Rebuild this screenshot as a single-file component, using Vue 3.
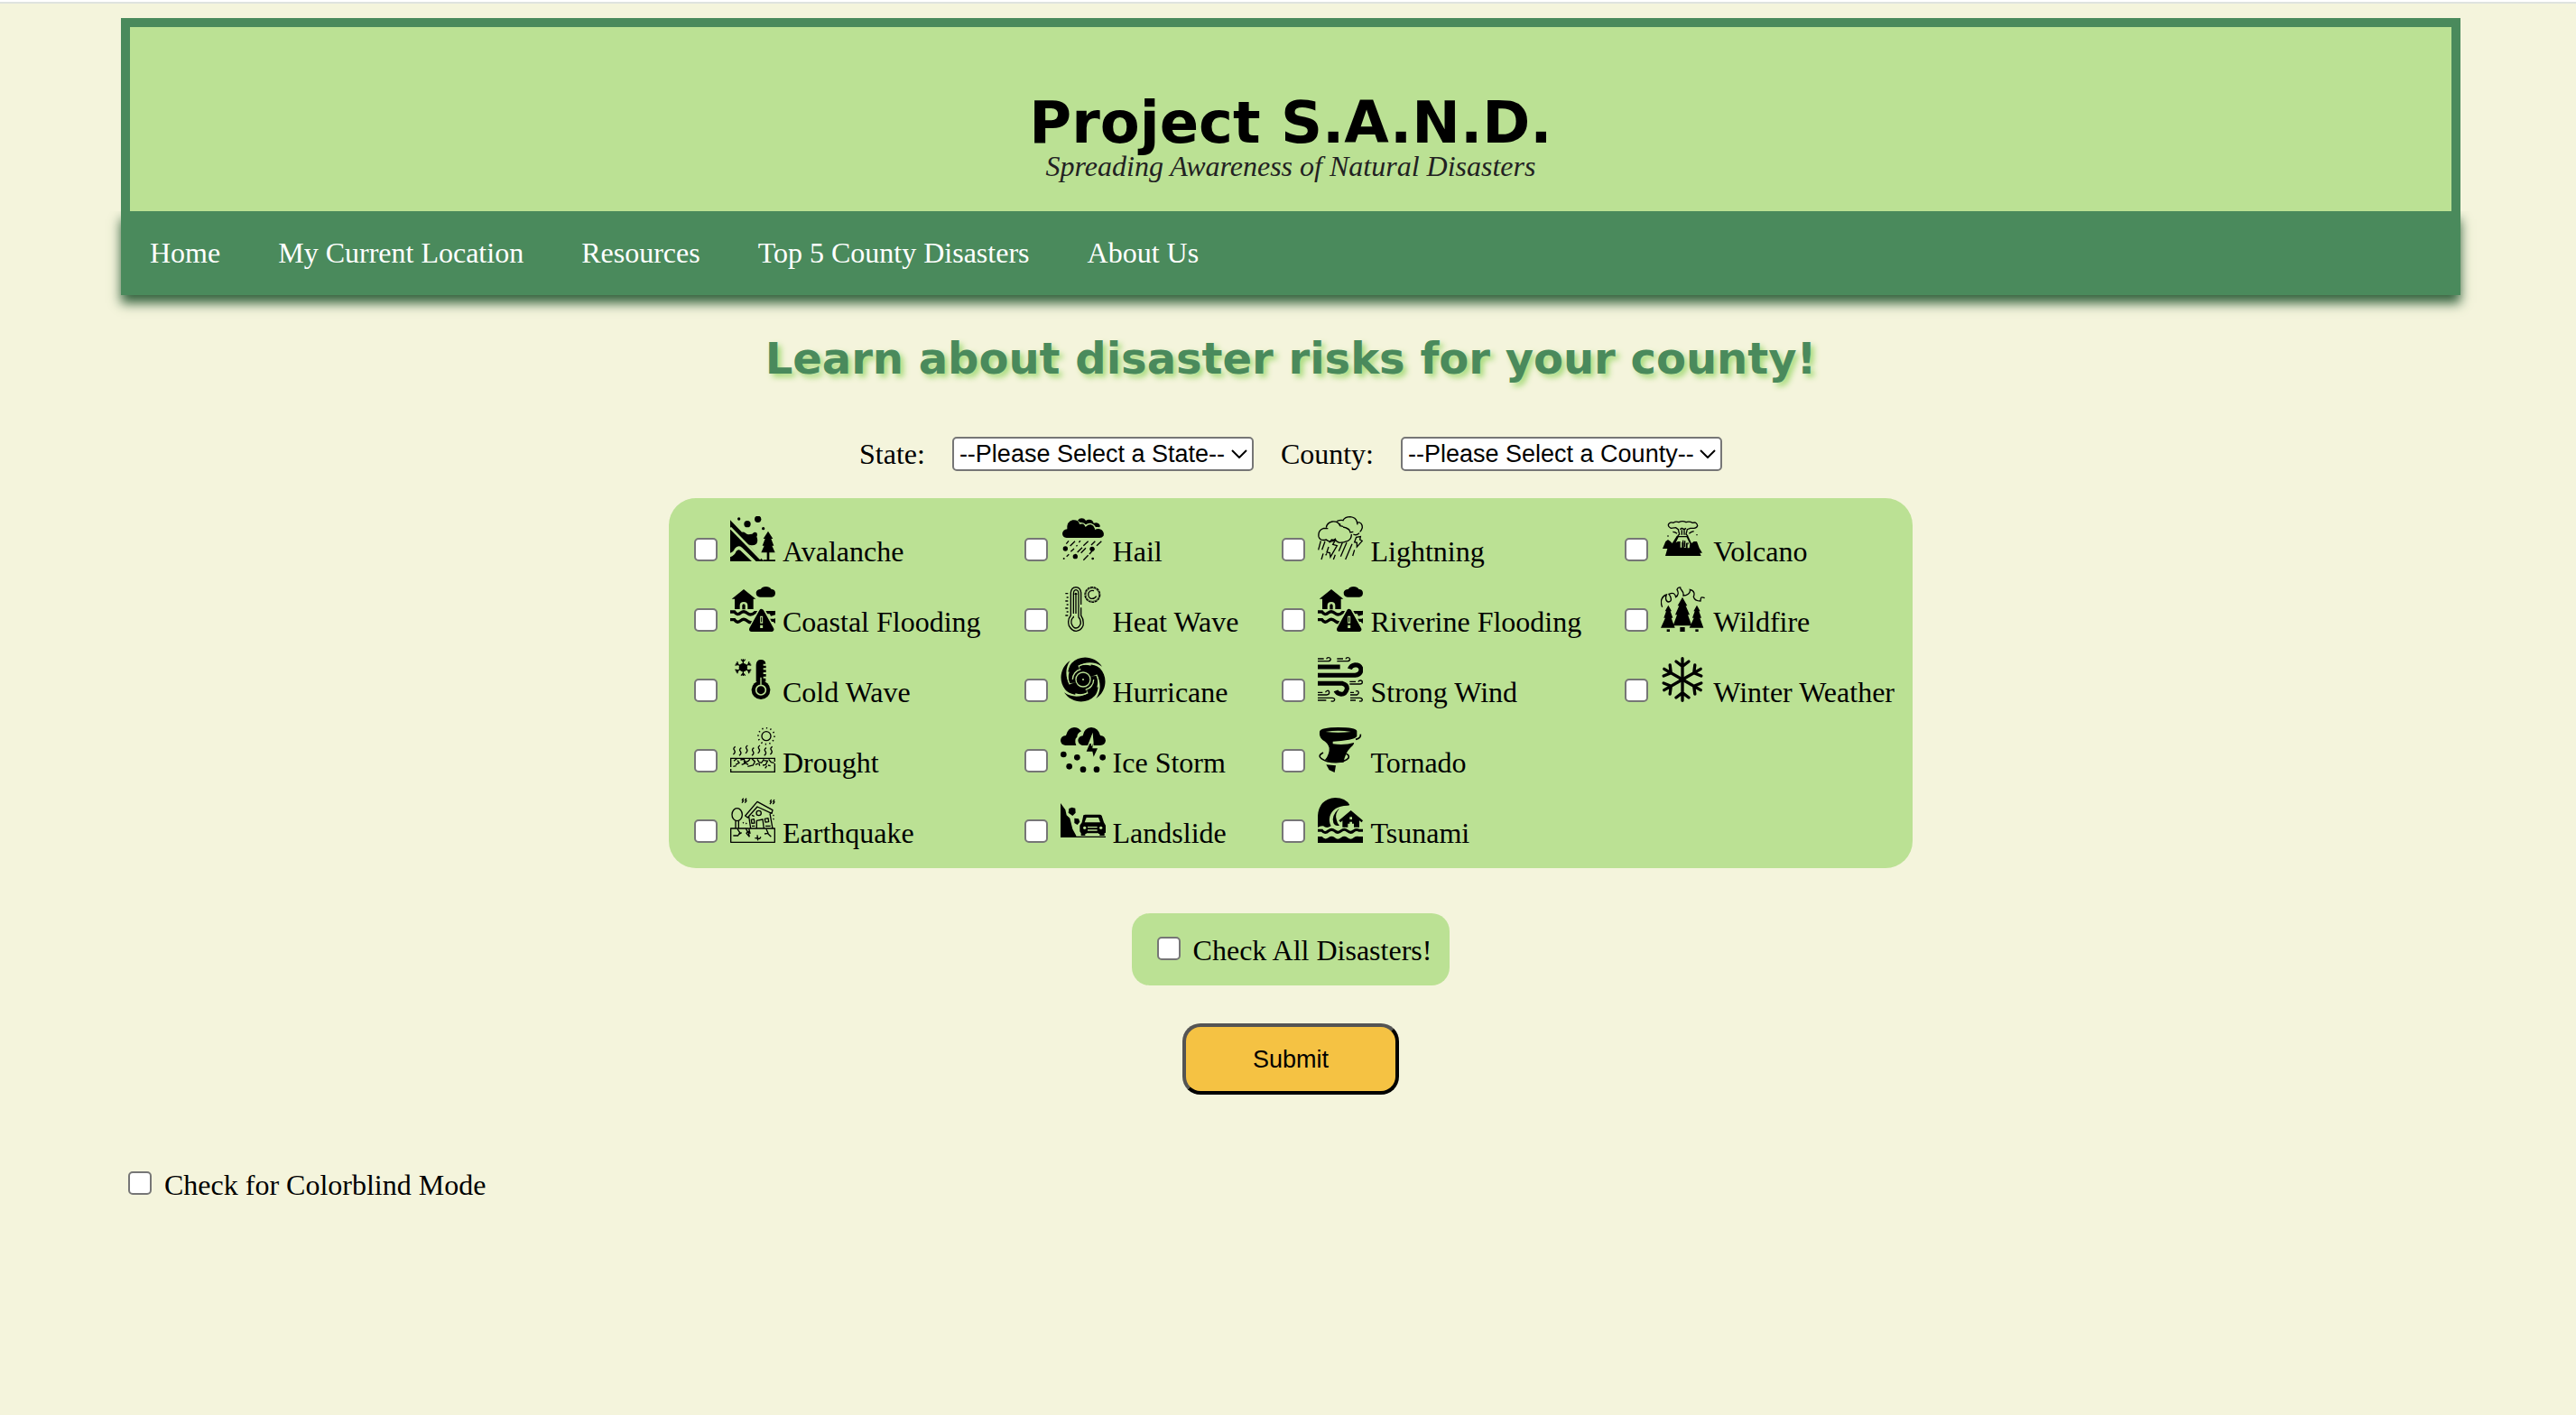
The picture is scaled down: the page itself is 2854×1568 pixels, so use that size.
<script setup>
import { ref, computed } from 'vue'

const links = ['Home', 'My Current Location', 'Resources', 'Top 5 County Disasters', 'About Us']

const columns = [
  [
    { name: 'Avalanche', icon: 'avalanche' },
    { name: 'Coastal Flooding', icon: 'flood' },
    { name: 'Cold Wave', icon: 'cold' },
    { name: 'Drought', icon: 'drought' },
    { name: 'Earthquake', icon: 'earthquake' },
  ],
  [
    { name: 'Hail', icon: 'hail' },
    { name: 'Heat Wave', icon: 'heat' },
    { name: 'Hurricane', icon: 'hurricane' },
    { name: 'Ice Storm', icon: 'ice' },
    { name: 'Landslide', icon: 'landslide' },
  ],
  [
    { name: 'Lightning', icon: 'lightning' },
    { name: 'Riverine Flooding', icon: 'flood' },
    { name: 'Strong Wind', icon: 'wind' },
    { name: 'Tornado', icon: 'tornado' },
    { name: 'Tsunami', icon: 'tsunami' },
  ],
  [
    { name: 'Volcano', icon: 'volcano' },
    { name: 'Wildfire', icon: 'wildfire' },
    { name: 'Winter Weather', icon: 'snow' },
  ],
]

const names = columns.flat().map((d) => d.name)
const selected = ref([])
const colorblind = ref(false)
const allSelected = computed({
  get: () => selected.value.length === names.length,
  set: (on) => {
    selected.value = on ? [...names] : []
  },
})
</script>

<template>
  <svg class="sprite" aria-hidden="true">
    <symbol id="avalanche" viewBox="0 0 150 150">
      <circle cx="29" cy="9" r="5" /><circle cx="57" cy="26" r="11" /><circle cx="92" cy="10" r="11" /><circle cx="110" cy="41" r="5" />
      <path d="M0 13 39 53Q46 52 51 56 58 62 66 60 75 60 76 56 82 50 89 56 91 62 88 68 94 82 87 92 78 99 66 96L60 94 112 150H88L0 62Z" />
      <path d="M0 38 102 142" stroke="#bbe194" stroke-width="8" />
      <path d="M0 48V122Q11 119 15 108 26 94 39 104L86 150H102L0 48Z" />
      <path d="M0 122 0 136Q15 130 19 118 26 108 34 114L72 150H0Z" />
      <path d="M0 129Q12 126 17 114 26 101 37 109L80 151" fill="none" stroke="#bbe194" stroke-width="6" />
      <path d="M126 50 142 75H136L145 98H139L149 121H130V145H150V150H110V145H122V121H103L113 98H107L116 75H110Z" />
    </symbol>

    <symbol id="flood" viewBox="0 0 150 150">
      <path d="M45 9 85 41H77V75H15V41H5Z" />
      <path d="M32 76V63Q32 51 45 51 58 51 58 63V76Z" fill="#bbe194" />
      <path d="M40 76V64Q40 58 45 58 50 58 50 64V76Z" />
      <path d="M99 35Q86 34 86 20 87 9 102 8 106 0 119 0 131 0 136 8 150 9 150 22 149 35 138 35Z" />
      <path d="M0 84H14Q24 98 35 87 46 78 58 89 68 98 82 86H150M0 110H14Q24 124 35 113 46 104 58 115 68 123 80 117M130 112H150" fill="none" stroke="#000" stroke-width="10" />
      <path d="M104 74 146 150H64Z" fill="#bbe194" stroke="#bbe194" stroke-width="18" stroke-linejoin="round" />
      <path d="M104 83 137 142H71Z" stroke="#000" stroke-width="16" stroke-linejoin="round" />
      <path d="M130 87 150 80V94L135 98ZM141 112 150 105V122L146 121Z" />
      <path d="M104 98V122M104 128V138" stroke="#bbe194" stroke-width="9" />
      <path d="M104 102V118" stroke="#000" stroke-width="3" />
    </symbol>

    <symbol id="cold" viewBox="0 0 150 150">
      <circle cx="43" cy="35" r="14" />
      <g fill="none" stroke="#000" stroke-width="4">
        <path id="cold-arm" d="M43 35V7M36 8 43 16 50 8" />
        <use href="#cold-arm" transform="rotate(60 43 35)" /><use href="#cold-arm" transform="rotate(120 43 35)" />
        <use href="#cold-arm" transform="rotate(180 43 35)" /><use href="#cold-arm" transform="rotate(240 43 35)" />
        <use href="#cold-arm" transform="rotate(300 43 35)" />
      </g>
      <path d="M86 82V26Q87 9 102 9 117 9 118 23H110V29H119V37H110V43H119V51H110V57H119V65H110V71H118V82Z" />
      <circle cx="102" cy="110" r="31" />
      <path d="M102 68V92" stroke="#bbe194" stroke-width="4" />
      <circle cx="102" cy="110" r="16" fill="none" stroke="#bbe194" stroke-width="5" />
    </symbol>

    <symbol id="drought" viewBox="0 0 150 150">
      <g fill="none" stroke="#000" stroke-width="4">
        <circle cx="120" cy="29" r="15" />
        <circle cx="120" cy="29" r="27" stroke-width="5" stroke-dasharray="4 10" />
        <path id="heat-wisp" d="M17 64Q8 70 14 76 19 83 10 90" />
        <use href="#heat-wisp" x="20" y="4" /><use href="#heat-wisp" x="41" y="-4" /><use href="#heat-wisp" x="62" y="4" />
        <use href="#heat-wisp" x="82" y="-4" /><use href="#heat-wisp" x="103" y="4" /><use href="#heat-wisp" x="123" />
        <path d="M2 132V103H148V114M148 120V148H2V138" />
        <path d="M12 112 22 104M18 124 30 118 24 110M10 130 20 128M34 108 46 106 50 116 60 112 66 106M38 124 48 120 46 112M50 118 60 124M72 104 82 114 76 126 58 130M84 124 94 120M90 106 96 116 104 118 112 106M98 128 96 120M108 126 118 124 124 112 112 110M116 136 122 128M128 106 136 116 146 118M126 126 134 128" />
      </g>
    </symbol>

    <symbol id="earthquake" viewBox="0 0 150 150">
      <g fill="none" stroke="#000" stroke-width="4" stroke-linejoin="round">
        <path d="M44 2 40 8 44 10 39 17M54 2 50 8 54 10 49 17M137 6 133 12 137 14 132 21M147 6 143 12 147 14 142 21" />
        <ellipse cx="23" cy="56" rx="17" ry="21" />
        <path d="M18 77V101M28 77V101M60 102H2V148H148V102H62L66 118 60 112 64 130M52 102 58 114 54 118 64 130" />
        <path d="M50 60 90 13 141 41 138 52 90 30 58 66ZM62 62 68 102M132 52 141 102M88 102V76L108 72 112 102" />
        <circle cx="95" cy="51" r="8" />
        <path d="M70 73 79 71 81 84 72 85ZM115 70 126 68 128 80 117 81ZM72 58 80 62M117 94H134M72 94H82" />
        <path d="M24 104 32 116 26 126 10 126M28 122 38 116M120 104 126 118 114 120M124 118 136 130M90 124 92 142M82 134 98 136 102 130" />
        <path d="M42 82 46 86M52 84 56 88M142 58 148 60M142 70 148 72" stroke-dasharray="4 3" />
      </g>
    </symbol>

    <symbol id="hail" viewBox="0 0 150 150">
      <path d="M57 14Q64 4 78 8 84 13 84 15 94 8 105 14 110 20 110 23 126 18 131 30 132 38 126 38L108 34 90 30 74 28Z" />
      <path d="M20 72Q6 70 6 57 8 45 22 43 20 18 40 13 57 10 65 26 77 22 83 36 92 26 104 30 114 34 114 45 126 38 137 46 146 54 143 65 138 72 130 72Z" />
      <path d="M62 24Q76 20 84 31 92 24 102 26 112 29 116 39 124 36 132 41" fill="none" stroke="#bbe194" stroke-width="4" />
      <path d="M27 82 19 92M48 83 32 99M66 82 61 87M92 83 76 98M115 83 102 96M136 83 120 98M45 108 34 118M56 97 52 100M72 104 56 120M84 106 68 122M112 108 96 126M28 127 20 134M52 126 44 136M92 130 76 146" stroke="#000" stroke-width="4" />
      <circle cx="16" cy="108" r="8" /><circle cx="105" cy="109" r="8" /><circle cx="49" cy="134" r="8" /><circle cx="11" cy="141" r="3" /><circle cx="107" cy="141" r="4" />
    </symbol>

    <symbol id="heat" viewBox="0 0 150 150">
      <g fill="none" stroke="#000" stroke-width="4">
        <path d="M68 60V20Q66 3 51 2 36 3 34 20V96Q22 110 28 130 38 148 52 148 68 147 75 130 78 110 68 96V70" />
        <path d="M60 92V24Q60 12 51 11 43 12 43 24V90M43 98V102Q34 108 36 122 42 138 51 138 62 137 67 122 67 108 60 102V92" />
        <path d="M51 24V90M47 26Q50 18 55 26" />
        <path d="M25 23H16M26 36H20M25 48H16M26 60H20M25 72H16M26 84H20M25 96H16" />
        <circle cx="106" cy="27" r="25" stroke-dasharray="9 2" /><circle cx="106" cy="27" r="22" stroke-width="2" />
        <path d="M111 14Q99 10 93 21 90 35 101 40 113 42 119 32" />
      </g>
    </symbol>

    <symbol id="hurricane" viewBox="0 0 150 150">
      <g transform="translate(75 75)">
        <path id="spiral-arm" d="M63-43C40-78-10-84-38-55-52-40-54-10-45 12L0 10-15-44C5-60 40-60 63-43Z" />
        <use href="#spiral-arm" transform="rotate(90)" /><use href="#spiral-arm" transform="rotate(180)" /><use href="#spiral-arm" transform="rotate(270)" />
        <g fill="none" stroke="#bbe194" stroke-width="4">
          <circle r="24" />
          <path d="M-35 0A35 35 0 0 1-8-34M35 0A35 35 0 0 1 8 34M-16-44C-4-52 12-52 26-48M16 44C4 52-12 52-26 48M44-16C52-4 52 12 48 26M-44 16C-52 4-52-12-48-26" />
        </g>
      </g>
    </symbol>

    <symbol id="ice" viewBox="0 0 150 150">
      <path d="M16 60Q0 58 0 43 2 28 18 27 24 2 45 0 60 0 69 13 55 20 55 32 44 40 52 60Z" />
      <path d="M72 60Q58 56 58 42 60 30 74 28 78 2 102 0 126 2 132 27 148 28 150 44 148 58 132 60Z" />
      <path d="M107 17 90 61H110Z" fill="#bbe194" />
      <path d="M97 54 86 80H106L110 98 123 70H106L107 60 108 54Z" />
      <path d="M107 24 101 60 105 62 109 50Z" fill="#bbe194" />
      <circle cx="10" cy="90" r="10" /><circle cx="55" cy="100" r="10" /><circle cx="140" cy="100" r="10" />
      <circle cx="29" cy="130" r="10" /><circle cx="75" cy="140" r="10" /><circle cx="120" cy="140" r="10" />
    </symbol>

    <symbol id="landslide" viewBox="0 0 150 150">
      <path d="M0 18 16 40 20 58 31 68 40 104 52 126V128H150V132H0Z" />
      <path d="M28 36 38 32 49 35 50 50 40 60 26 50ZM46 68 60 70 64 80 56 90 46 84Z" />
      <path d="M76 58Q78 56 82 56H130Q135 56 137 60L144 82 150 92V116L146 118V126H130V120H82V126H68V118L64 112V92L71 82Z" />
      <path d="M86 66H126L132 82H80Z" fill="#bbe194" />
      <path d="M90 98H122M90 108H122M86 120H126" stroke="#bbe194" stroke-width="4" />
      <circle cx="80" cy="100" r="5" fill="#bbe194" /><circle cx="134" cy="100" r="5" fill="#bbe194" />
    </symbol>

    <symbol id="lightning" viewBox="0 0 150 150">
      <g fill="none" stroke="#000" stroke-width="4">
        <path d="M72 88Q60 84 58 78 46 88 34 82 30 80 28 78 8 84 3 68 0 46 20 40L34 41M28 38Q30 22 48 18 68 16 74 32L84 34M76 28Q70 26 62 18M84 36Q106 40 108 54L118 52M112 60Q112 76 100 82 86 88 72 88M50 82 60 74M106 46 96 40 92 38" />
        <path d="M64 16Q76 12 84 14 90 2 108 2 126 4 130 18L132 28M132 20Q148 20 148 38 144 50 140 52M138 56Q130 66 118 60" />
        <path d="M10 82 2 112M24 84 14 112M38 88 46 78 58 80 50 94 64 98 42 136 40 122 30 120 36 102M82 88 70 116M96 88 76 134M114 92 92 144M30 124 26 130M18 124 12 144M58 128 52 144M122 112 116 132" />
        <path d="M128 70 122 86 130 88 130 102 148 82 140 78 142 68Z" />
      </g>
    </symbol>

    <symbol id="wind" viewBox="0 0 150 150">
      <g fill="none" stroke="#000">
        <path d="M0 33H74M0 61H124Q143 59 144 42 142 26 124 26 110 28 106 40M0 88H82Q98 92 97 106 92 124 78 124 64 122 60 112" stroke-width="15" />
        <g stroke-width="4">
          <path d="M0 6H20M0 14H34Q42 14 43 8 42 2 36 2 30 2 29 7M64 6H84M64 14H98Q106 14 107 8 106 2 100 2 94 2 93 7" />
          <path d="M106 82H126M106 90H140Q148 90 148 84 148 78 142 78 136 78 135 83M0 126H30Q38 126 38 118 38 111 32 112 26 113 26 118M0 118H16M0 136H48Q56 136 56 142 55 149 44 147M0 144H28M108 126H130Q136 124 136 118 134 111 126 114M108 136H140Q148 137 148 143 146 149 138 147M108 144H126M108 118H120" />
        </g>
      </g>
    </symbol>

    <symbol id="tornado" viewBox="0 0 150 150">
      <path d="M6 14Q10 0 68 0 126 0 130 12V30Q124 38 104 41 78 45 50 47V55Q90 60 120 51 122 56 110 66 90 86 86 116 54 120 24 108 40 88 38 68 34 52 16 42 4 32 6 14Z" />
      <path d="M26 15Q68 8 110 15 68 20 26 15Z" fill="#bbe194" />
      <path d="M142 23Q144 36 126 40M18 84Q-2 94 12 104 28 116 60 116 92 114 102 102 106 92 94 88" fill="none" stroke="#000" stroke-width="5" />
      <path d="M28 124 60 127 56 150 38 142Z" />
    </symbol>

    <symbol id="tsunami" viewBox="0 0 150 150">
      <path d="M0 96V60Q4 4 58 0 92 0 106 24 104 26 98 26 50 28 40 62 36 80 44 94 30 104 18 94 10 94 0 98Z" />
      <path d="M70 38Q56 54 62 72 64 84 72 92 58 96 52 84 44 60 70 36Z" />
      <path d="M110 42 150 76 146 82 138 76V98H120V86H100V98H82V76L76 82 70 76Z" />
      <path d="M106 64H114V72H106ZM106 80H114V96H106Z" fill="#bbe194" />
      <path d="M0 109H14Q24 122 36 110 46 102 56 110 66 120 78 110 88 102 98 110 110 120 120 110 128 104 138 109H150" fill="none" stroke="#000" stroke-width="9" />
      <path d="M0 129H14Q24 142 36 132 46 124 56 132 66 142 78 132 88 124 98 132 110 142 120 132 128 126 138 129H150V150H0Z" />
    </symbol>

    <symbol id="volcano" viewBox="0 0 150 150">
      <path d="M15 132 22 108H6L16 84 24 78 32 84 38 90 53 66H91L102 90 110 84 120 84 128 106 138 122 130 122 134 132Z" />
      <path d="M59 70H86L97 92 95 106H89V92L84 88V104H77V88L70 86V104H65V84L57 84 50 88Z" fill="#bbe194" />
      <path d="M80 82V102M74 80V88M90 88V94" stroke="#000" stroke-width="4" />
      <g fill="none" stroke="#000" stroke-width="4">
        <path d="M56 66 62 60 58 44 50 38 34 40Q22 34 26 26 32 18 42 22 50 16 60 20 72 14 84 20 94 16 106 22 120 18 122 32 118 42 98 40L88 44 84 60 90 66M64 44 70 40 78 44 84 40M70 46V62M78 46V62" />
        <path d="M40 52Q48 52 54 58M110 50Q100 52 94 58M24 64V68M120 60V64" />
      </g>
    </symbol>

    <symbol id="wildfire" viewBox="0 0 150 150">
      <g id="pine-side"><path d="M25 62 36 82H32L40 104H35L47 137H0L15 104H10L18 82H14Z" /><path d="M20 142H30V150H20Z" /></g>
      <use href="#pine-side" x="95" />
      <path d="M72 35 88 64H83L96 94H90L103 130H41L54 94H48L61 64H56ZM64 135H80V150H64Z" />
      <path d="M5 68C-4 48 4 32 19 27 15 38 16 50 26 51 38 50 36 36 27 25 42 18 48 24 50 35 58 30 60 20 54 10 56 4 60 2 65 3 64 12 78 14 75 30 86 30 100 22 97 10 114 14 112 26 109 34 112 46 122 48 132 48 134 40 130 31 146 38 148 52 141 61" fill="none" stroke="#000" stroke-width="4" />
    </symbol>

    <symbol id="snow" viewBox="0 0 150 150">
      <g fill="none" stroke="#000" stroke-width="10" stroke-linecap="round">
        <path id="snow-arm" d="M72 75V5M51 15 72 31 93 15" />
        <use href="#snow-arm" transform="rotate(60 72 75)" /><use href="#snow-arm" transform="rotate(120 72 75)" />
        <use href="#snow-arm" transform="rotate(180 72 75)" /><use href="#snow-arm" transform="rotate(240 72 75)" />
        <use href="#snow-arm" transform="rotate(300 72 75)" />
      </g>
    </symbol>
  </svg>

  <div class="page">
    <header class="banner">
      <h1>Project S.A.N.D.</h1>
      <p>Spreading Awareness of Natural Disasters</p>
    </header>
    <nav class="menu">
      <a v-for="link in links" :key="link" href="#">{{ link }}</a>
    </nav>

    <main>
      <h2>Learn about disaster risks for your county!</h2>
      <form @submit.prevent>
        <div class="pickers">
          <label for="state">State:</label>
          <div class="select state">
            <select id="state"><option>--Please Select a State--</option></select>
            <svg class="chevron" viewBox="0 0 18 10" aria-hidden="true"><path d="M1 1 9 9 17 1" /></svg>
          </div>
          <label for="county">County:</label>
          <div class="select county">
            <select id="county"><option>--Please Select a County--</option></select>
            <svg class="chevron" viewBox="0 0 18 10" aria-hidden="true"><path d="M1 1 9 9 17 1" /></svg>
          </div>
        </div>

        <div class="hazards">
          <ul v-for="(column, i) in columns" :key="i">
            <li v-for="item in column" :key="item.name">
              <label class="option">
                <input v-model="selected" type="checkbox" :value="item.name" />
                <svg class="icon" aria-hidden="true"><use :href="'#' + item.icon" /></svg>
                <span>{{ item.name }}</span>
              </label>
            </li>
          </ul>
        </div>

        <label class="option check-all">
          <input v-model="allSelected" type="checkbox" />
          <span>Check All Disasters!</span>
        </label>

        <button type="submit">Submit</button>
      </form>
    </main>

    <label class="option colorblind">
      <input v-model="colorblind" type="checkbox" />
      <span>Check for Colorblind Mode</span>
    </label>
  </div>
</template>

<style>
body {
  background: #f4f4dc;
  border-top: 2px solid #fff;
}
</style>

<style scoped>
.sprite {
  position: absolute;
  width: 0;
  height: 0;
}

.page {
  border-top: 2px solid #dfe3df;
  padding: 16px 128px 40px 134px;
  font-family: "Liberation Serif", "Times New Roman", serif;
  font-size: 32px;
  line-height: 36px;
  color: #000;
}

.banner {
  border: 10px solid #4a8a5c;
  border-bottom: 0;
  background: #bbe194;
  padding: 76px 0 32px;
  text-align: center;
}

h1 {
  margin: 0;
  font: bold 64px/60px "DejaVu Sans", Verdana, sans-serif;
}

.banner p {
  margin: 0;
  font-style: italic;
  color: #222;
}

.menu {
  display: flex;
  gap: 64px;
  padding: 28px 32px 29px;
  background: #4a8a5c;
  box-shadow: 0 9px 12px #35633f;
  clip-path: inset(0 -20px -30px);
}

.menu a {
  color: #fff;
  text-decoration: none;
}

h2 {
  margin: 46px 0 0;
  font: bold 48px/48px "DejaVu Sans", Verdana, sans-serif;
  color: #4a8a5c;
  text-align: center;
  text-shadow: 4px 4px 6px #a8db7c;
}

form {
  display: flex;
  flex-direction: column;
  align-items: center;
}

.pickers {
  display: flex;
  align-items: center;
  gap: 30px;
  margin: 63px 0 30px;
}

.select {
  position: relative;
}

.state {
  width: 334px;
}

.county {
  width: 356px;
}

select {
  appearance: none;
  display: block;
  box-sizing: border-box;
  width: 100%;
  height: 38px;
  padding: 0 6px;
  border: 2px solid #767676;
  border-radius: 5px;
  background: #fff;
  color: #000;
  font: 27px/34px "Liberation Sans", Arial, sans-serif;
}

.chevron {
  position: absolute;
  right: 7px;
  top: 14px;
  width: 18px;
  height: 10px;
  fill: none;
  stroke: #000;
  stroke-width: 2;
  pointer-events: none;
}

.hazards {
  display: flex;
  gap: 48px;
  padding: 10px 20px 10px 28px;
  border-radius: 30px;
  background: #bbe194;
}

ul {
  margin: 0;
  padding: 0;
  list-style: none;
}

li {
  box-sizing: border-box;
  height: 78px;
  padding-top: 10px;
}

.option {
  display: flex;
  align-items: baseline;
}

.option input {
  appearance: none;
  flex: none;
  box-sizing: border-box;
  width: 26px;
  height: 26px;
  margin: 0 14px 0 0;
  border: 2px solid #767676;
  border-radius: 5px;
  background: #fff;
}

.option input:checked {
  background: #4a8a5c;
}

.icon {
  flex: none;
  width: 50px;
  height: 50px;
  margin-right: 8px;
}

.check-all {
  margin-top: 50px;
  padding: 23px 20px 21px 28px;
  border-radius: 20px;
  background: #bbe194;
}

button {
  box-sizing: border-box;
  width: 240px;
  height: 79px;
  margin-top: 42px;
  border: 4px solid;
  border-color: #545454 #000 #000 #545454;
  border-radius: 20px;
  background: #f5c243;
  color: #000;
  font: 27px/32px "Liberation Sans", Arial, sans-serif;
}

.colorblind {
  width: fit-content;
  margin: 82px 0 0 8px;
}
</style>
